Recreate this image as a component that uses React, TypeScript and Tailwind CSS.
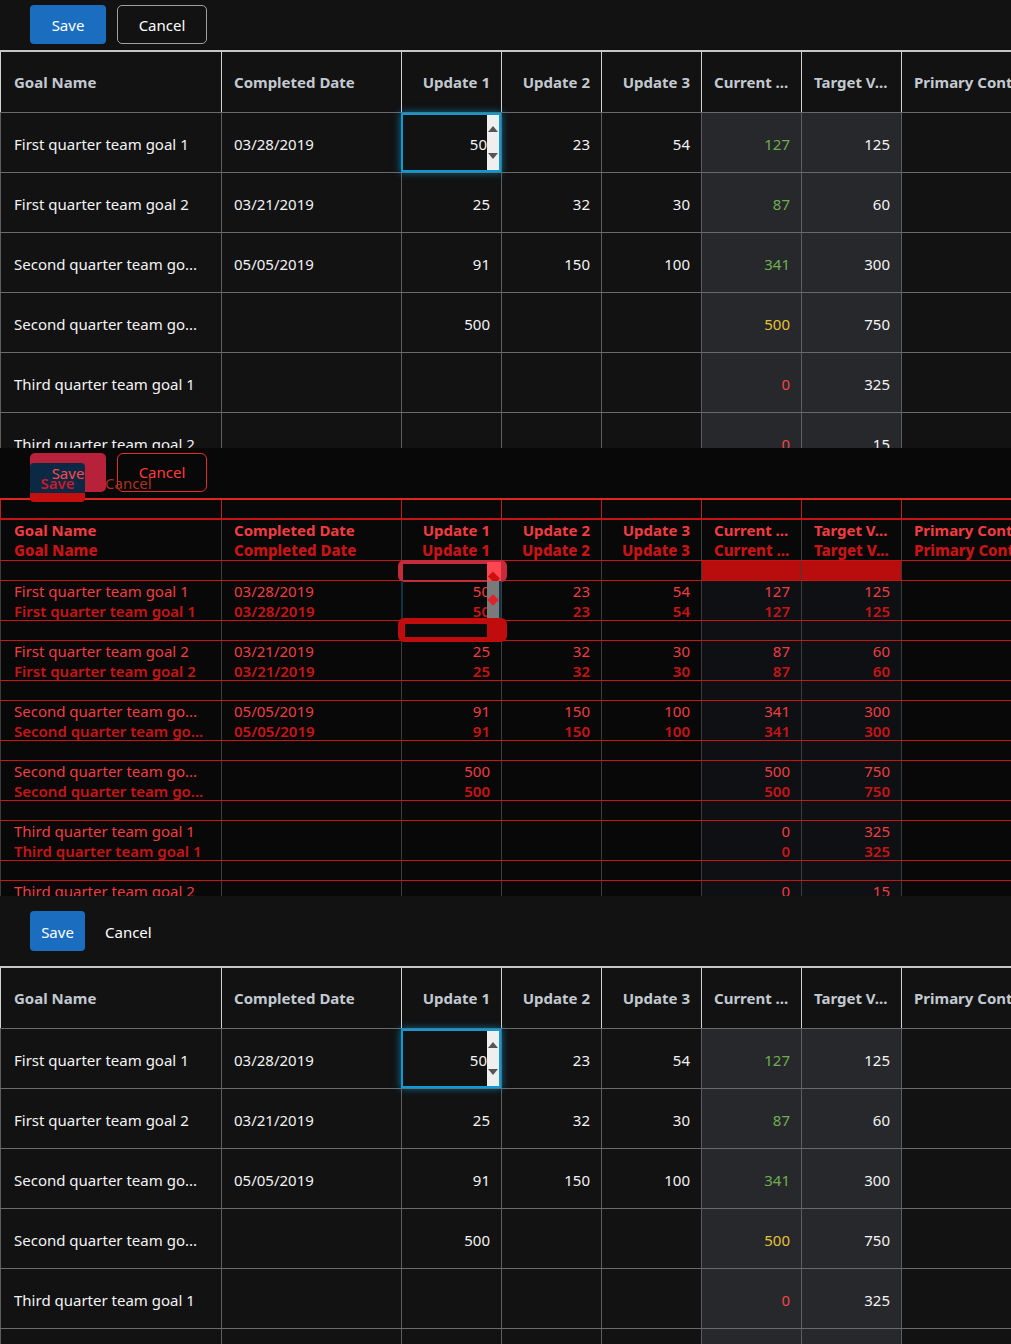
import React from 'react';

const COLS = 'grid grid-cols-[221px_180px_100px_100px_100px_100px_100px_110px]';

type Row = {
  name: string;
  date: string;
  u1: string;
  u2: string;
  u3: string;
  cur: string;
  curColor: string;
  target: string;
  editor?: boolean;
};

const ROWS: Row[] = [
  { name: 'First quarter team goal 1', date: '03/28/2019', u1: '50', u2: '23', u3: '54', cur: '127', curColor: 'text-[#6fae4f]', target: '125', editor: true },
  { name: 'First quarter team goal 2', date: '03/21/2019', u1: '25', u2: '32', u3: '30', cur: '87', curColor: 'text-[#6fae4f]', target: '60' },
  { name: 'Second quarter team go...', date: '05/05/2019', u1: '91', u2: '150', u3: '100', cur: '341', curColor: 'text-[#6fae4f]', target: '300' },
  { name: 'Second quarter team go...', date: '', u1: '500', u2: '', u3: '', cur: '500', curColor: 'text-[#e6c234]', target: '750' },
  { name: 'Third quarter team goal 1', date: '', u1: '', u2: '', u3: '', cur: '0', curColor: 'text-[#f24646]', target: '325' },
  { name: 'Third quarter team goal 2', date: '', u1: '', u2: '', u3: '', cur: '0', curColor: 'text-[#f24646]', target: '15' },
];

const HEADERS = ['Goal Name', 'Completed Date', 'Update 1', 'Update 2', 'Update 3', 'Current ...', 'Target V...', 'Primary Contact'];
const ALIGN = [
  'justify-start pl-[13px]',
  'justify-start pl-[12px]',
  'justify-end pr-[11px]',
  'justify-end pr-[11px]',
  'justify-end pr-[11px]',
  'justify-start pl-[12px]',
  'justify-start pl-[12px]',
  'justify-start pl-[12px]',
];
const BODY_ALIGN = [
  'justify-start pl-[13px]',
  'justify-start pl-[12px]',
  'justify-end pr-[11px]',
  'justify-end pr-[11px]',
  'justify-end pr-[11px]',
  'justify-end pr-[11px]',
  'justify-end pr-[11px]',
  'justify-start pl-[12px]',
];

function Editor() {
  return (
    <div className="relative z-10 flex border-2 border-[#0f9ad6] shadow-[0_0_7px_1px_rgba(15,154,214,0.6)]">
      <div className="flex flex-1 items-center justify-end pt-[4px]">50</div>
      <div className="flex w-[12px] flex-col items-center justify-between bg-[#efefef] py-[11px]">
        <div className="h-0 w-0 border-x-[5px] border-b-[6px] border-x-transparent border-b-[#555555]" />
        <div className="h-0 w-0 border-x-[5px] border-t-[6px] border-x-transparent border-t-[#555555]" />
      </div>
    </div>
  );
}

function Table() {
  return (
    <div className="border-t-2 border-[#c6c6c6]">
      <div className={`${COLS} h-[60px]`}>
        {HEADERS.map((h, i) => (
          <div
            key={i}
            className={`flex items-center overflow-hidden whitespace-nowrap border-l border-[#d2d2d2] font-bold text-[#c3c9d1] ${ALIGN[i]}`}
          >
            {h}
          </div>
        ))}
      </div>
      {ROWS.map((r, ri) => {
        const vals = [r.name, r.date, r.u1, r.u2, r.u3, r.cur, r.target, ''];
        return (
          <div key={ri} className={`${COLS} h-[60px] border-t border-[#6a6a6a]`}>
            {vals.map((v, i) => {
              if (i === 2 && r.editor) return <Editor key={i} />;
              const bg = i === 5 || i === 6 ? 'bg-[#27282c]' : '';
              const color = i === 5 ? r.curColor : 'text-[#f4f4f4]';
              return (
                <div
                  key={i}
                  className={`flex items-center overflow-hidden whitespace-nowrap border-l border-[#5e5e5e] pt-[4px] ${bg} ${color} ${BODY_ALIGN[i]}`}
                >
                  {v}
                </div>
              );
            })}
          </div>
        );
      })}
    </div>
  );
}

function GridPanel({ variant }: { variant: 'a' | 'b' }) {
  return (
    <div className="h-[448px] overflow-hidden bg-[#121212] text-[#f4f4f4]">
      {variant === 'a' ? (
        <div className="flex h-[50px] items-start gap-[11px] pl-[30px] pt-[5px]">
          <button className="h-[39px] w-[76px] rounded-[4px] bg-[#1b6ebf] pt-[2px] text-white">Save</button>
          <button className="h-[39px] w-[90px] rounded-[5px] border border-[#a0a0a0] pt-[2px] text-white">Cancel</button>
        </div>
      ) : (
        <div className="flex h-[70px] items-center pl-[30px]">
          <button className="h-[40px] w-[55px] rounded-[4px] bg-[#1b6ebf] pt-[2px] text-white">Save</button>
          <button className="ml-[20px] pt-[2px] text-white">Cancel</button>
        </div>
      )}
      <Table />
    </div>
  );
}

function DiffBand({ kind }: { kind: 'first' | 'red' | 'plain' }) {
  const rowCls =
    kind === 'first'
      ? 'h-[20px] border-t-2 border-[#e02424]'
      : 'h-[20px] border-t border-[#c81414]';
  return (
    <div className={`${COLS} ${rowCls}`}>
      {HEADERS.map((_, i) => {
        let bg = '';
        if (i === 5 || i === 6) {
          if (kind === 'red') bg = 'bg-[#b90d0d]';
          else if (kind === 'plain') bg = 'bg-[#0e1014]';
        }
        const border = kind === 'first' ? 'border-[#b82020]' : 'border-[#3c3c3c]';
        return <div key={i} className={`border-l ${border} ${bg}`} />;
      })}
    </div>
  );
}

function DiffBlock({ vals, header }: { vals: string[]; header?: boolean }) {
  const rowCls = header
    ? 'h-[42px] border-t-2 border-[#c81414]'
    : 'h-[40px] border-t border-[#c81414]';
  const align = header ? ALIGN : BODY_ALIGN;
  return (
    <div className={`${COLS} ${rowCls}`}>
      {vals.map((v, i) => {
        const bg = !header && (i === 5 || i === 6) ? 'bg-[#0e1014]' : '';
        return (
          <div key={i} className={`flex flex-col overflow-hidden whitespace-nowrap border-l border-[#3c3c3c] ${bg}`}>
            <div className={`flex h-[20px] items-center leading-[20px] text-[#f23c40] ${header ? 'font-bold' : ''} ${align[i]}`}>{v}</div>
            <div className={`flex h-[20px] items-center leading-[20px] text-[#c81414] ${header ? 'font-extrabold' : 'font-semibold'} ${align[i]}`}>{v}</div>
          </div>
        );
      })}
    </div>
  );
}

function DiffPanel() {
  return (
    <div className="relative h-[448px] overflow-hidden bg-[#080808]">
      <div className="h-[50px]" />
      <DiffBand kind="first" />
      <DiffBlock vals={HEADERS} header />
      <DiffBand kind="red" />
      {ROWS.map((r, i) => (
        <React.Fragment key={i}>
          {i > 0 && <DiffBand kind="plain" />}
          <DiffBlock vals={[r.name, r.date, r.u1, r.u2, r.u3, r.cur, r.target, '']} />
        </React.Fragment>
      ))}

      {/* button diff overlays */}
      <div className="absolute left-[30px] top-[5px] h-[39px] w-[76px] rounded-[5px] bg-[#b8213a]" />
      <div className="absolute left-[30px] top-[15px] h-[30px] w-[55px] rounded-t-[4px] bg-[#0b2945]" />
      <div className="absolute left-[30px] top-[45px] h-[9px] w-[55px] rounded-b-[4px] bg-[#c40f0f]" />
      <div className="absolute left-[30px] top-[15px] flex h-[20px] w-[76px] items-center justify-center text-[#ff4a4a]">Save</div>
      <div className="absolute left-[30px] top-[25px] flex h-[20px] w-[55px] items-center justify-center font-semibold text-[#c81a2a]">Save</div>
      <div className="absolute left-[117px] top-[5px] flex h-[39px] w-[90px] items-center justify-center rounded-[6px] border border-[#e42a2a] text-[#ff3b3b]">Cancel</div>
      <div className="absolute left-[105px] top-[25px] flex h-[20px] items-center text-[#a8341c]">Cancel</div>

      {/* editor diff overlays */}
      <div className="absolute left-[398px] top-[112px] h-[22px] w-[109px] rounded-[6px] bg-[#c42c3c]" />
      <div className="absolute left-[403px] top-[116px] h-[16px] w-[84px] bg-[#0a0a0a]" />
      <div className="absolute left-[487px] top-[114px] h-[19px] w-[14px] bg-[#ff4552]" />
      <div className="absolute left-[489px] top-[126px] h-[7px] w-[10px] rotate-45 bg-[#d01010]" />
      <div className="absolute left-[401px] top-[133px] h-[37px] w-[2px] bg-[#0b3547]" />
      <div className="absolute left-[499px] top-[133px] h-[37px] w-[2px] bg-[#0b3547]" />
      <div className="absolute left-[487px] top-[133px] h-[37px] w-[12px] bg-[#7a7a7a]" />
      <div className="absolute left-[489px] top-[148px] h-[8px] w-[8px] rotate-45 bg-[#e0202a]" />
      <div className="absolute left-[398px] top-[170px] h-[24px] w-[109px] rounded-[6px] bg-[#c00c0c]" />
      <div className="absolute left-[405px] top-[176px] h-[13px] w-[82px] bg-[#0a0a0a]" />
    </div>
  );
}

export default function App() {
  return (
    <div className="w-[1011px] overflow-hidden bg-[#121212] font-['Noto_Sans',sans-serif] text-[15px]">
      <GridPanel variant="a" />
      <DiffPanel />
      <GridPanel variant="b" />
    </div>
  );
}
